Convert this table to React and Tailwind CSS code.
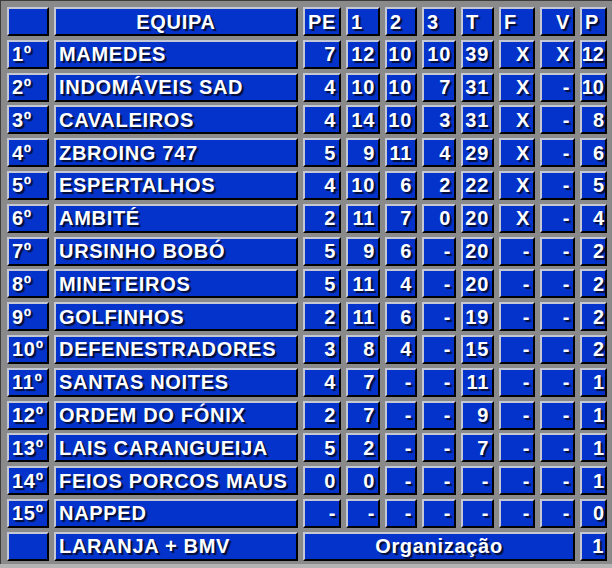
const rows = [
  ["1º", "MAMEDES", "7", "12", "10", "10", "39", "X", "X", "12"],
  ["2º", "INDOMÁVEIS SAD", "4", "10", "10", "7", "31", "X", "-", "10"],
  ["3º", "CAVALEIROS", "4", "14", "10", "3", "31", "X", "-", "8"],
  ["4º", "ZBROING 747", "5", "9", "11", "4", "29", "X", "-", "6"],
  ["5º", "ESPERTALHOS", "4", "10", "6", "2", "22", "X", "-", "5"],
  ["6º", "AMBITÉ", "2", "11", "7", "0", "20", "X", "-", "4"],
  ["7º", "URSINHO BOBÓ", "5", "9", "6", "-", "20", "-", "-", "2"],
  ["8º", "MINETEIROS", "5", "11", "4", "-", "20", "-", "-", "2"],
  ["9º", "GOLFINHOS", "2", "11", "6", "-", "19", "-", "-", "2"],
  ["10º", "DEFENESTRADORES", "3", "8", "4", "-", "15", "-", "-", "2"],
  ["11º", "SANTAS NOITES", "4", "7", "-", "-", "11", "-", "-", "1"],
  ["12º", "ORDEM DO FÓNIX", "2", "7", "-", "-", "9", "-", "-", "1"],
  ["13º", "LAIS CARANGUEIJA", "5", "2", "-", "-", "7", "-", "-", "1"],
  ["14º", "FEIOS PORCOS MAUS", "0", "0", "-", "-", "-", "-", "-", "1"],
  ["15º", "NAPPED", "-", "-", "-", "-", "-", "-", "-", "0"],
];

const headers = [
  { label: "", align: "justify-start" },
  { label: "EQUIPA", align: "justify-center" },
  { label: "PE", align: "justify-start" },
  { label: "1", align: "justify-start" },
  { label: "2", align: "justify-start" },
  { label: "3", align: "justify-start" },
  { label: "T", align: "justify-start" },
  { label: "F", align: "justify-start" },
  { label: "V", align: "justify-end" },
  { label: "P", align: "justify-start" },
];

function Cell({ children, align = "justify-end", className = "px-[3px]" }) {
  return (
    <div
      className={`flex h-[29px] items-center whitespace-nowrap border-2 border-t-[#c4c8d4] border-l-[#c4c8d4] border-b-black border-r-black bg-[#0433cc] text-white [text-shadow:2px_2px_1px_rgba(0,0,0,0.75)] ${align} ${className}`}
    >
      {children}
    </div>
  );
}

export default function App() {
  return (
    <div className="h-[568px] w-[612px] overflow-hidden bg-[#b4b4b4]">
      <div
        className="grid w-[612px] grid-cols-[42px_244px_38px_34px_32px_34px_33px_36px_35px_27px] gap-x-[5px] gap-y-[3.8px] border-l border-t border-l-[#3c3c3c] border-t-[#3c3c3c] bg-[#8a8a8a] pb-[3px] pl-[6px] pr-[5px] pt-[6px] text-[20px] font-bold leading-none tracking-[0.7px]"
        style={{ fontFamily: '"Liberation Sans", Arial, sans-serif' }}
      >
        {headers.map((h, i) => (
          <Cell key={`h${i}`} align={h.align}>
            {h.label}
          </Cell>
        ))}

        {rows.map((row) =>
          row.map((value, i) => (
            <Cell
              key={`${row[0]}-${i}`}
              align={i < 2 ? "justify-start" : "justify-end"}
              className={i === 9 ? "pl-0 pr-px tracking-normal" : "px-[3px]"}
            >
              {value}
            </Cell>
          ))
        )}

        <Cell align="justify-start" />
        <Cell align="justify-start">LARANJA + BMV</Cell>
        <Cell align="justify-center" className="col-span-7">
          Organização
        </Cell>
        <Cell className="pl-0 pr-px">1</Cell>
      </div>
    </div>
  );
}
